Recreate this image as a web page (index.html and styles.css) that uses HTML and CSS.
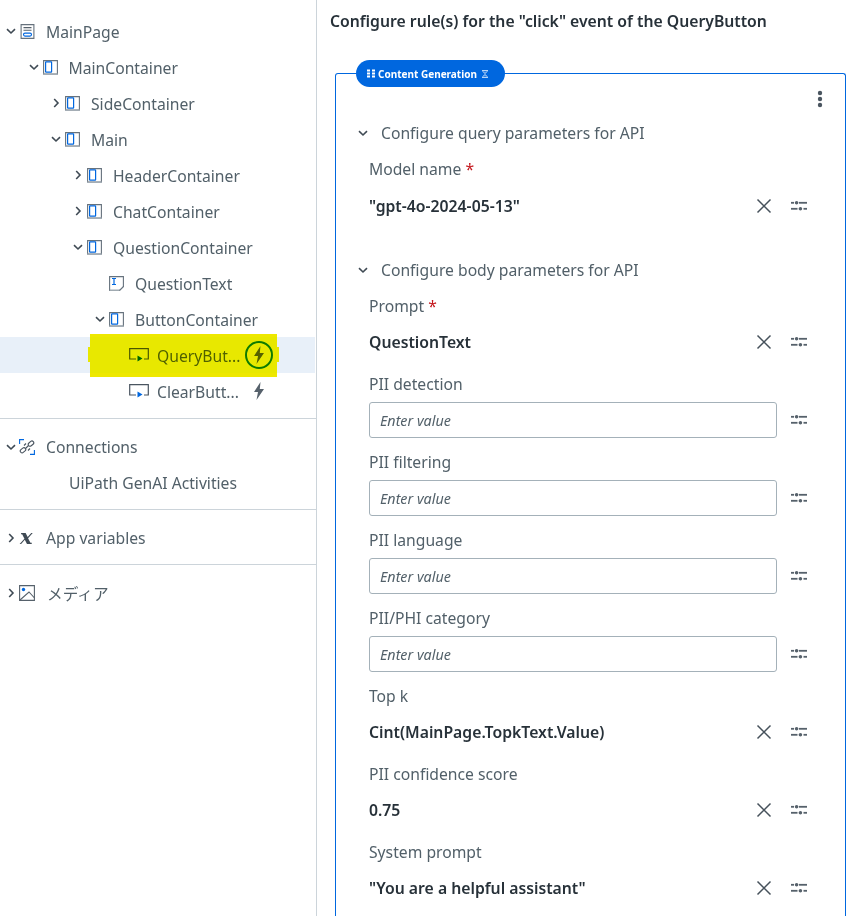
FILE: index.html
```html
<!DOCTYPE html>
<html lang="en">
<head>
<meta charset="utf-8">
<title>Rules</title>
<link rel="stylesheet" href="styles.css">
</head>
<body>
<svg class="defs" width="0" height="0" aria-hidden="true">
  <defs>
    <symbol id="down" viewBox="0 0 12 12"><path d="M2 4.200l4 3.800 4-3.800" fill="none" stroke="#3f4a54" stroke-width="1.600"/></symbol>
    <symbol id="right" viewBox="0 0 12 12"><path d="M4.200 2l3.800 4-3.800 4" fill="none" stroke="#3f4a54" stroke-width="1.600"/></symbol>
    <symbol id="box" viewBox="0 0 15 15"><path d="M.6 14V.6h13.800V14z" fill="none" stroke="#66727d" stroke-width="1.100"/><path d="M0 13.600h15V15H0z" fill="#a4adb5"/><rect x="2.600" y="1.800" width="6" height="10.400" rx=".5" fill="none" stroke="#0067df" stroke-width="1.200"/></symbol>
    <symbol id="btn" viewBox="0 0 20 14"><path d="M7 11H.7V.7h18.600V11H15" fill="none" stroke="#4a5560" stroke-width="1.200"/><path d="M8.500 7.500l5 3-5 3z" fill="#0067df"/></symbol>
    <symbol id="bolt" viewBox="0 0 12 18"><path d="M7.500 0L1 10h4l-1.500 8L11 7H6.800z" fill="#56616b"/></symbol>
    <symbol id="x" viewBox="0 0 16 16"><path d="M1.500 1.500l13 13m0-13l-13 13" fill="none" stroke="#46515b" stroke-width="1.500"/></symbol>
    <symbol id="tune" viewBox="0 0 16 12"><g fill="#56616b"><rect x="0" y="1.900" width="3" height="1.800"/><rect x="8" y="1.900" width="8" height="1.800"/><circle cx="5.600" cy="2.800" r="1.800"/><rect x="0" y="7.900" width="6.500" height="1.800"/><rect x="12.500" y="7.900" width="3.500" height="1.800"/><circle cx="9.400" cy="8.800" r="1.800"/></g></symbol>
  </defs>
</svg>
<div class="app">
  <aside class="side">
    <div class="tree">
      <div class="row d0"><svg class="chev"><use href="#down"/></svg>
        <svg class="ic" viewBox="0 0 15 15"><path d="M1.100.6h12.800v13.800H1.100z" fill="none" stroke="#66727d" stroke-width="1.100"/><path d="M3.500 3.600h8M3.500 6.300h8" stroke="#56616b" stroke-width="1.100"/><rect x="3.500" y="9.100" width="8" height="3" rx="1.500" fill="none" stroke="#0067df" stroke-width="1.100"/></svg>
        <span class="label">MainPage</span></div>
      <div class="row d1"><svg class="chev"><use href="#down"/></svg><svg class="ic"><use href="#box"/></svg><span class="label">MainContainer</span></div>
      <div class="row d2"><svg class="chev"><use href="#right"/></svg><svg class="ic"><use href="#box"/></svg><span class="label">SideContainer</span></div>
      <div class="row d2"><svg class="chev"><use href="#down"/></svg><svg class="ic"><use href="#box"/></svg><span class="label">Main</span></div>
      <div class="row d3"><svg class="chev"><use href="#right"/></svg><svg class="ic"><use href="#box"/></svg><span class="label">HeaderContainer</span></div>
      <div class="row d3"><svg class="chev"><use href="#right"/></svg><svg class="ic"><use href="#box"/></svg><span class="label">ChatContainer</span></div>
      <div class="row d3"><svg class="chev"><use href="#down"/></svg><svg class="ic"><use href="#box"/></svg><span class="label">QuestionContainer</span></div>
      <div class="row d4"><span class="chev"></span>
        <svg class="ic" viewBox="0 0 15 15"><path d="M11 14.400H.6V.6h13.800V11" fill="none" stroke="#66727d" stroke-width="1.100"/><path d="M.6 14.400H11" stroke="#a4adb5" stroke-width="1.100"/><path d="M3 2.500h4M5 2.500v6M3 8.500h4" fill="none" stroke="#0067df" stroke-width="1.200"/><path d="M14.500 10.500l-4 4" stroke="#66727d" stroke-width="1.100"/></svg>
        <span class="label">QuestionText</span></div>
      <div class="row d4"><svg class="chev"><use href="#down"/></svg><svg class="ic"><use href="#box"/></svg><span class="label">ButtonContainer</span></div>
      <div class="row d5 selected"><span class="chev"></span><svg class="ic wide"><use href="#btn"/></svg><span class="label short">QueryBut...</span><span class="boltwrap ring"><svg class="bolt"><use href="#bolt"/></svg></span></div>
      <div class="row d5"><span class="chev"></span><svg class="ic wide"><use href="#btn"/></svg><span class="label short">ClearButt...</span><span class="boltwrap"><svg class="bolt"><use href="#bolt"/></svg></span></div>
    </div>
    <div class="group">
      <div class="row d0"><svg class="chev"><use href="#down"/></svg>
        <svg class="ic big" viewBox="0 0 16 16"><path d="M.6 5V.6H5M11 15.400h4.400V11" fill="none" stroke="#0067df" stroke-width="1.100"/><g fill="none" stroke="#4a5560" stroke-width="1.100"><rect x="1" y="9.500" width="6" height="3.600" rx="1.800" transform="rotate(-40 4 11.300)"/><rect x="9" y="2.800" width="6" height="3.600" rx="1.800" transform="rotate(-40 12 4.600)"/><path d="M6.500 9.500l3-3M9 11.500l2-2M5 6.500l2-2"/></g></svg>
        <span class="label">Connections</span></div>
      <div class="row d1 leaf"><span class="label">UiPath GenAI Activities</span></div>
    </div>
    <div class="group">
      <div class="row d0"><svg class="chev"><use href="#right"/></svg>
        <span class="ic varx">x</span>
        <span class="label">App variables</span></div>
    </div>
    <div class="group">
      <div class="row d0"><svg class="chev"><use href="#right"/></svg>
        <svg class="ic big" viewBox="0 0 16 16"><path d="M.6.6h14.800v14.800H.6z" fill="none" stroke="#56616b" stroke-width="1.100"/><path d="M1 15L10 7l5.500 6" fill="none" stroke="#56616b" stroke-width="1.100"/><circle cx="4.500" cy="4.500" r="1.700" fill="#0067df"/></svg>
        <span class="label jp">メディア</span></div>
    </div>
  </aside>
  <main class="main">
    <h1 class="title">Configure rule(s) for the "click" event of the QueryButton</h1>
    <section class="card">
      <div class="pill">
        <svg class="grip" viewBox="0 0 8 9"><path d="M0 .5h3v2H0zM5 .5h3v2H5zM0 3.500h3v2H0zM5 3.500h3v2H5zM0 6.500h3v2H0zM5 6.500h3v2H5z" fill="#fff"/></svg>
        <span>Content Generation</span>
        <svg class="sigma" viewBox="0 0 8 8"><path d="M1 .7h6M1 7.300h6M2 1.500l2 2 2-2M2 6.500l2-2 2 2" fill="none" stroke="#fff" stroke-width=".9"/></svg>
      </div>
      <div class="menu"><svg class="kebab" viewBox="0 0 6 18"><circle cx="3" cy="3" r="2.200"/><circle cx="3" cy="9" r="2.200"/><circle cx="3" cy="15" r="2.200"/></svg></div>

      <div class="section"><svg class="secchev"><use href="#down"/></svg><span>Configure query parameters for API</span></div>
      <div class="field">
        <div class="flabel">Model name <em>*</em></div>
        <div class="frow lead"><div class="val">"gpt-4o-2024-05-13"</div><svg class="clear"><use href="#x"/></svg><span class="tunebox"><svg class="tune"><use href="#tune"/></svg></span></div>
      </div>

      <div class="section next"><svg class="secchev"><use href="#down"/></svg><span>Configure body parameters for API</span></div>
      <div class="field">
        <div class="flabel">Prompt <em>*</em></div>
        <div class="frow"><div class="val">QuestionText</div><svg class="clear"><use href="#x"/></svg><span class="tunebox"><svg class="tune"><use href="#tune"/></svg></span></div>
      </div>
      <div class="field">
        <div class="flabel">PII detection</div>
        <div class="frow"><div class="input">Enter value</div><span class="tunebox"><svg class="tune"><use href="#tune"/></svg></span></div>
      </div>
      <div class="field">
        <div class="flabel">PII filtering</div>
        <div class="frow"><div class="input">Enter value</div><span class="tunebox"><svg class="tune"><use href="#tune"/></svg></span></div>
      </div>
      <div class="field">
        <div class="flabel">PII language</div>
        <div class="frow"><div class="input">Enter value</div><span class="tunebox"><svg class="tune"><use href="#tune"/></svg></span></div>
      </div>
      <div class="field">
        <div class="flabel">PII/PHI category</div>
        <div class="frow"><div class="input">Enter value</div><span class="tunebox"><svg class="tune"><use href="#tune"/></svg></span></div>
      </div>
      <div class="field">
        <div class="flabel">Top k</div>
        <div class="frow"><div class="val">Cint(MainPage.TopkText.Value)</div><svg class="clear"><use href="#x"/></svg><span class="tunebox"><svg class="tune"><use href="#tune"/></svg></span></div>
      </div>
      <div class="field">
        <div class="flabel">PII confidence score</div>
        <div class="frow"><div class="val">0.75</div><svg class="clear"><use href="#x"/></svg><span class="tunebox"><svg class="tune"><use href="#tune"/></svg></span></div>
      </div>
      <div class="field">
        <div class="flabel">System prompt</div>
        <div class="frow"><div class="val">"You are a helpful assistant"</div><svg class="clear"><use href="#x"/></svg><span class="tunebox"><svg class="tune"><use href="#tune"/></svg></span></div>
      </div>
    </section>
  </main>
</div>
<div class="marker"><div class="stroke stroke-a"></div><div class="stroke stroke-b"></div></div>
</body>
</html>
```
FILE: styles.css
```css
* { box-sizing: border-box; }
html, body { margin: 0; height: 916px; overflow: hidden; background: #fff; }
body { font-family: "Noto Sans", "Noto Sans CJK JP", sans-serif; font-size: 15.700px; color: #526069; position: relative; }
.defs { position: absolute; }
.app { display: flex; width: 852px; height: 916px; }

.side { width: 317px; flex: none; border-right: 1px solid #ccd4da; padding-top: 13px; }
.tree { padding-bottom: 9px; }
.tree .label { padding-top: 2px; }
.row { display: flex; align-items: center; height: 36px; width: 315px; }
.d0 { padding-left: 5px; }
.d1 { padding-left: 27.500px; }
.d2 { padding-left: 50px; }
.d3 { padding-left: 72px; }
.d4 { padding-left: 94px; }
.d5 { padding-left: 116px; }
.selected { background: #e8f0f9; }
.chev { width: 12px; height: 12px; flex: none; margin-right: 3px; }
.ic { width: 15px; height: 15px; flex: none; margin-right: 11px; }
.d0 .ic.big { width: 16px; height: 16px; margin-right: 11px; margin-left: -1px; }
.ic.wide { width: 20px; height: 14px; margin-right: 8px; margin-left: -2px; }
.varx { font-family: "DejaVu Serif", serif; font-style: italic; font-weight: 700; font-size: 21px; line-height: 11px; color: #3f4a54; padding-bottom: 4px; }
.label { white-space: nowrap; }
.short { width: 87.500px; }
.jp { margin-left: 1px; }
.boltwrap { width: 28px; height: 28px; flex: none; display: flex; align-items: center; justify-content: center; border-radius: 50%; }
.ring { border: 2px solid #0f7a2a; }
.bolt { width: 12px; height: 18px; }
.group { border-top: 1px solid #ccd4da; padding: 10px 0 8px; }
.leaf { padding-left: 69px; }

.main { flex: 1; min-width: 0; padding: 9px 0 0 13px; }
.title { margin: 0; font-size: 15.750px; line-height: 24px; font-weight: 600; color: #273139; white-space: nowrap; }
.card { position: relative; margin: 40px 0 0 5px; width: 511px; height: 843px; border: 1px solid #0067df; border-bottom: 0; border-radius: 3px 3px 0 0; padding: 0 0 0 33px; }
.pill { position: absolute; left: 20px; top: -14px; width: 149px; height: 27px; border-radius: 14px; background: #0067df; color: #fff; font-size: 10px; font-weight: 700; display: flex; align-items: center; padding-left: 11px; white-space: nowrap; }
.grip { width: 8px; height: 9px; margin-right: 3px; }
.sigma { width: 8px; height: 8px; margin-left: 4px; }
.menu { height: 47px; display: flex; justify-content: flex-end; align-items: flex-start; padding: 16px 22px 0 0; }
.kebab { width: 6px; height: 18px; fill: #4a5560; }
.section { height: 24px; display: flex; align-items: center; color: #526069; margin-left: -12px; }
.section.next { margin-top: 34px; }
.secchev { width: 12px; height: 12px; margin-right: 12px; }
.field { padding-top: 12px; }
.flabel { height: 24px; line-height: 24px; color: #526069; }
.flabel em { font-style: normal; color: #c4161c; }
.frow { display: flex; align-items: center; height: 36px; margin-top: 6px; width: 442px; }
.frow.lead { margin-top: 7px; }
.val { flex: 1; font-weight: 600; font-size: 15.750px; color: #273139; white-space: nowrap; }
.clear { width: 16px; height: 16px; flex: none; }
.tunebox { width: 24px; height: 36px; flex: none; display: flex; align-items: center; justify-content: center; margin-left: auto; }
.clear + .tunebox { margin-left: 15px; }
.tune { width: 16px; height: 12px; }
.input { width: 408px; height: 36px; border: 1px solid #a4b1b9; border-radius: 3px; padding: 1px 0 0 10px; line-height: 34px; font-size: 14.300px; font-style: italic; color: #526069; }

.marker { position: absolute; left: 0; top: 0; width: 852px; height: 916px; mix-blend-mode: darken; pointer-events: none; }
.stroke { position: absolute; background: #eee800; }
.stroke-a { left: 90px; top: 334px; width: 187px; height: 43px; }
.stroke-b { left: 88px; top: 347px; width: 191px; height: 15px; }
```
